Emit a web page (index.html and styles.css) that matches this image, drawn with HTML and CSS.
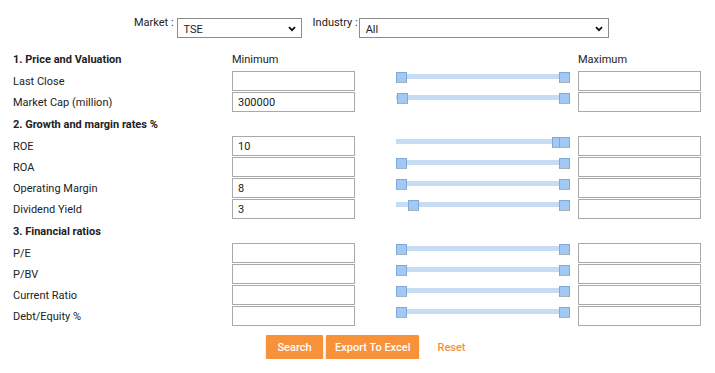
FILE: index.html
```html
<!DOCTYPE html>
<html lang="en">
  <head>
    <meta charset="UTF-8" />
    <meta name="viewport" content="width=device-width, initial-scale=1.0" />
    <title>Stock Screener</title>
    <link rel="stylesheet" href="styles.css">
  </head>
  <body>
    <div class="container">
      <div class="filters">
        <label class="filter-label">Market :</label>
        <div class="select market">
          <span>TSE</span>
          <svg width="8" height="6" viewBox="0 0 8 6"><path d="M1 1.2 L4 4.2 L7 1.2" fill="none" stroke="#111" stroke-width="1.8"/></svg>
        </div>
        <label class="filter-label industry-label">Industry :</label>
        <div class="select industry">
          <span>All</span>
          <svg width="8" height="6" viewBox="0 0 8 6"><path d="M1 1.2 L4 4.2 L7 1.2" fill="none" stroke="#111" stroke-width="1.8"/></svg>
        </div>
      </div>

      <div class="screener">
        <div class="section">
          <div class="title">1. Price and Valuation</div>
          <div class="col-head">Minimum</div>
          <div></div>
          <div class="col-head">Maximum</div>
        </div>
        <div class="row">
          <div class="name">Last Close</div>
          <input type="text" value="" />
          <div class="slider"><div class="track"></div><span class="handle" style="left: 0px"></span><span class="handle" style="left: 163px"></span></div>
          <input type="text" value="" />
        </div>
        <div class="row">
          <div class="name">Market Cap (million)</div>
          <input type="text" value="300000" />
          <div class="slider"><div class="track"></div><span class="handle" style="left: 1px"></span><span class="handle" style="left: 163px"></span></div>
          <input type="text" value="" />
        </div>

        <div class="section">
          <div class="title">2. Growth and margin rates %</div>
          <div></div><div></div><div></div>
        </div>
        <div class="row">
          <div class="name">ROE</div>
          <input type="text" value="10" />
          <div class="slider"><div class="track"></div><span class="handle" style="left: 156px"></span><span class="handle" style="left: 163px"></span></div>
          <input type="text" value="" />
        </div>
        <div class="row">
          <div class="name">ROA</div>
          <input type="text" value="" />
          <div class="slider"><div class="track"></div><span class="handle" style="left: 0px"></span><span class="handle" style="left: 163px"></span></div>
          <input type="text" value="" />
        </div>
        <div class="row">
          <div class="name">Operating Margin</div>
          <input type="text" value="8" />
          <div class="slider"><div class="track"></div><span class="handle" style="left: 0px"></span><span class="handle" style="left: 163px"></span></div>
          <input type="text" value="" />
        </div>
        <div class="row">
          <div class="name">Dividend Yield</div>
          <input type="text" value="3" />
          <div class="slider"><div class="track"></div><span class="handle" style="left: 12px"></span><span class="handle" style="left: 163px"></span></div>
          <input type="text" value="" />
        </div>

        <div class="section">
          <div class="title">3. Financial ratios</div>
          <div></div><div></div><div></div>
        </div>
        <div class="row">
          <div class="name">P/E</div>
          <input type="text" value="" />
          <div class="slider"><div class="track"></div><span class="handle" style="left: 0px"></span><span class="handle" style="left: 163px"></span></div>
          <input type="text" value="" />
        </div>
        <div class="row">
          <div class="name">P/BV</div>
          <input type="text" value="" />
          <div class="slider"><div class="track"></div><span class="handle" style="left: 0px"></span><span class="handle" style="left: 163px"></span></div>
          <input type="text" value="" />
        </div>
        <div class="row">
          <div class="name">Current Ratio</div>
          <input type="text" value="" />
          <div class="slider"><div class="track"></div><span class="handle" style="left: 0px"></span><span class="handle" style="left: 163px"></span></div>
          <input type="text" value="" />
        </div>
        <div class="row">
          <div class="name">Debt/Equity %</div>
          <input type="text" value="" />
          <div class="slider"><div class="track"></div><span class="handle" style="left: 0px"></span><span class="handle" style="left: 163px"></span></div>
          <input type="text" value="" />
        </div>
      </div>

      <div class="actions">
        <button class="btn">Search</button>
        <button class="btn">Export To Excel</button>
        <button class="btn-link">Reset</button>
      </div>
    </div>
  </body>
</html>
```

FILE: styles.css
```css
body {
  margin: 0;
  font-family: Roboto, "Liberation Sans", sans-serif;
  font-size: 11px;
  color: #222;
  background: #fff;
}
.container {
  padding: 18px 0 0 8px;
  width: 693px;
}
.filters {
  display: flex;
  align-items: flex-start;
  padding-left: 126px;
  height: 30px;
}
.filter-label {
  margin-top: -2px;
  margin-right: 3px;
}
.industry-label {
  margin-left: 11px;
  margin-right: 1px;
}
.select {
  display: flex;
  align-items: center;
  justify-content: space-between;
  box-sizing: border-box;
  height: 20px;
  border: 1px solid #8a8a8a;
  padding: 2px 5px 0 6px;
  font-size: 11px;
}
.market {
  width: 125px;
}
.industry {
  width: 250px;
}
.section,
.row {
  display: grid;
  grid-template-columns: 224px 123px 1fr 123px;
  align-items: center;
}
.section {
  height: 23px;
}
.row {
  height: 20px;
  margin-bottom: 1px;
}
.title {
  font-weight: bold;
  padding-left: 5px;
}
.name {
  padding-left: 5px;
}
.row input {
  box-sizing: border-box;
  width: 123px;
  height: 20px;
  margin: 0;
  border: 1px solid #a9a9a9;
  padding: 1px 5px 0;
  font-family: Roboto, "Liberation Sans", sans-serif;
  font-size: 11px;
  color: #222;
  outline: none;
}
.slider {
  position: relative;
  margin: 0 8px 0 41px;
  height: 20px;
}
.track {
  position: absolute;
  left: 0;
  right: 0;
  top: 3px;
  height: 5px;
  background-color: #c6dcf2;
}
.handle {
  position: absolute;
  top: 1px;
  box-sizing: border-box;
  width: 11px;
  height: 11px;
  background-color: #a2c8f4;
  border: 1px solid #80a9d8;
  border-bottom-color: #a8b0b8;
}
.actions {
  display: flex;
  align-items: center;
  padding-left: 258px;
  margin-top: 9px;
}
.btn {
  min-width: 57px;
  height: 24px;
  padding: 0 9px;
  margin-right: 3px;
  border: none;
  border-radius: 1px;
  background-color: #f7923a;
  color: #fff;
  font-family: Roboto, "Liberation Sans", sans-serif;
  font-size: 11px;
  font-weight: 500;
  box-shadow: 0 2px 2px rgba(0, 0, 0, 0.22);
  cursor: pointer;
}
.btn-link {
  margin-left: 15px;
  padding: 0;
  border: none;
  background: none;
  color: #f7923a;
  font-family: Roboto, "Liberation Sans", sans-serif;
  font-size: 11px;
  font-weight: 500;
  cursor: pointer;
}
```
